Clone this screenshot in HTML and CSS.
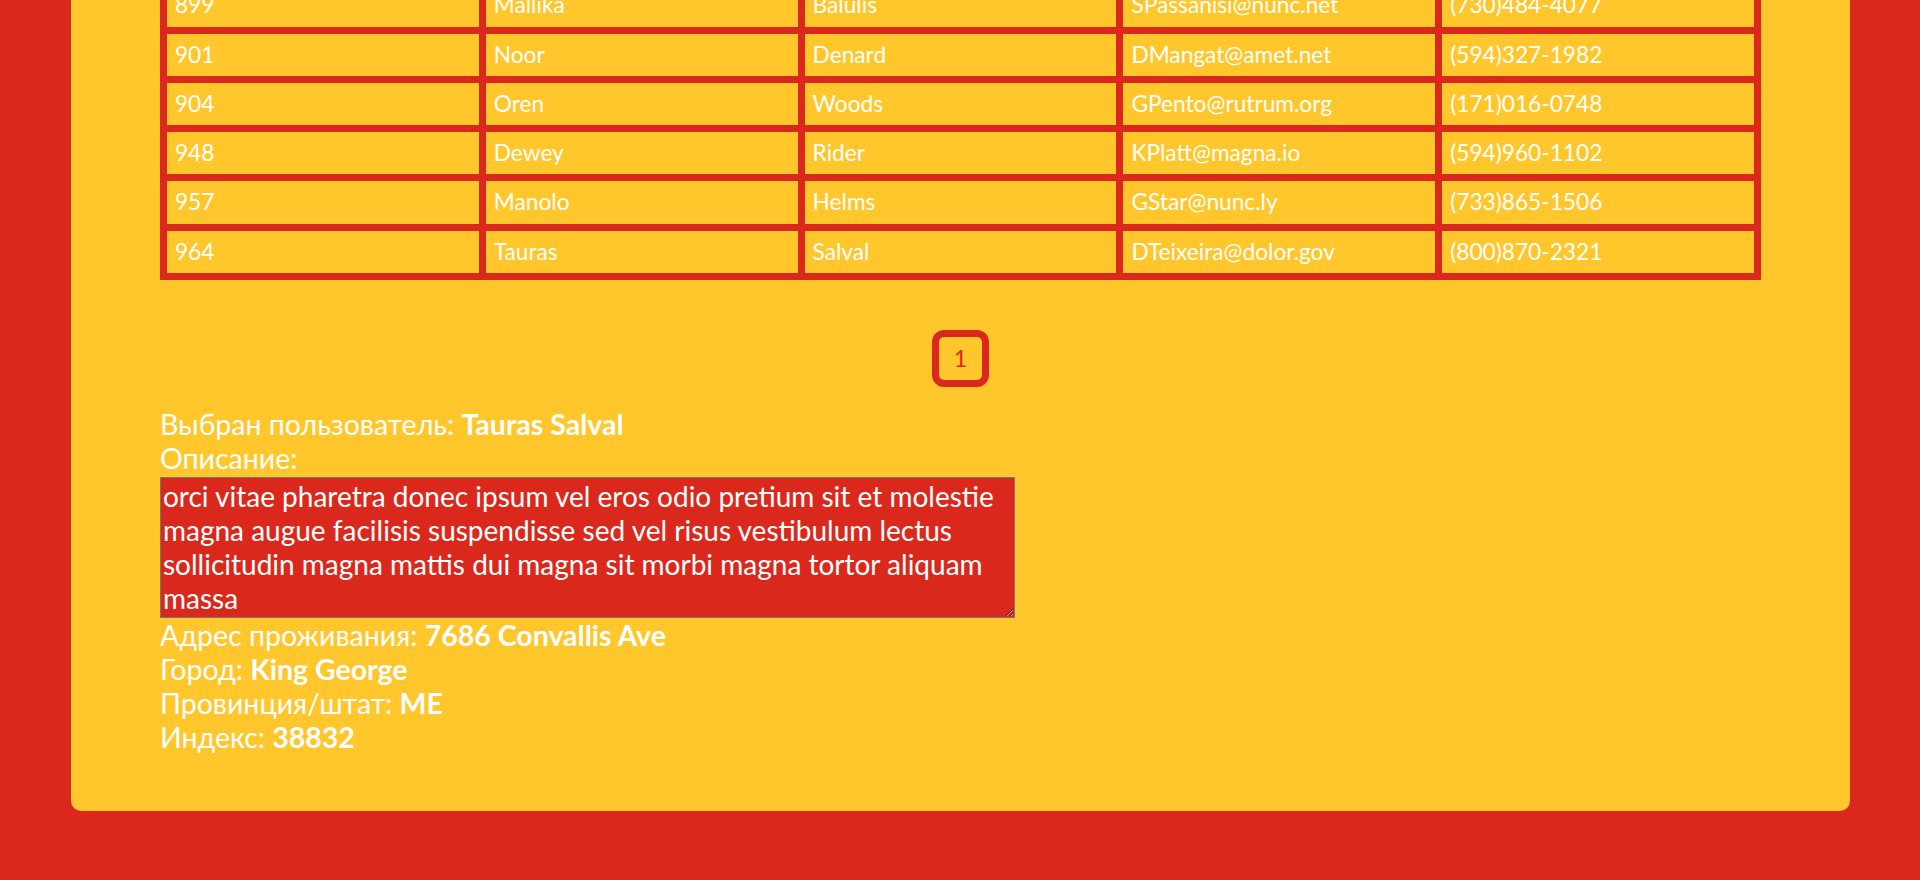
FILE: index.html
```html
<!DOCTYPE html>
<html lang="ru">
<head>
<meta charset="utf-8">
<title>Таблица пользователей</title>
<link rel="stylesheet" href="styles.css">
</head>
<body>
<div class="page">
  <div class="inner">
    <table class="users">
      <thead>
        <tr><th>id</th><th>firstName</th><th>lastName</th><th>email</th><th>phone</th></tr>
      </thead>
      <tbody>
        <tr><td>899</td><td>Mallika</td><td>Balulis</td><td>SPassanisi@nunc.net</td><td>(730)484-4077</td></tr>
        <tr><td>901</td><td>Noor</td><td>Denard</td><td>DMangat@amet.net</td><td>(594)327-1982</td></tr>
        <tr><td>904</td><td>Oren</td><td>Woods</td><td>GPento@rutrum.org</td><td>(171)016-0748</td></tr>
        <tr><td>948</td><td>Dewey</td><td>Rider</td><td>KPlatt@magna.io</td><td>(594)960-1102</td></tr>
        <tr><td>957</td><td>Manolo</td><td>Helms</td><td>GStar@nunc.ly</td><td>(733)865-1506</td></tr>
        <tr><td>964</td><td>Tauras</td><td>Salval</td><td>DTeixeira@dolor.gov</td><td>(800)870-2321</td></tr>
      </tbody>
    </table>

    <div class="pager">
      <button class="pager-btn" type="button">1</button>
    </div>

    <div class="info">
      <div class="info-line">Выбран пользователь: <b>Tauras Salval</b></div>
      <div class="info-line">Описание:</div>
      <textarea class="description">orci vitae pharetra donec ipsum vel eros odio pretium sit et molestie magna augue facilisis suspendisse sed vel risus vestibulum lectus sollicitudin magna mattis dui magna sit morbi magna tortor aliquam massa</textarea>
      <div class="info-line">Адрес проживания: <b>7686 Convallis Ave</b></div>
      <div class="info-line">Город: <b>King George</b></div>
      <div class="info-line">Провинция/штат: <b>ME</b></div>
      <div class="info-line">Индекс: <b>38832</b></div>
    </div>
  </div>
</div>
<script src="script.js"></script>
</body>
</html>
```

FILE: styles.css
```css
html, body {
  margin: 0;
}

body {
  background: #DA291C;
  color: #ffffff;
  font-family: Lato, "Noto Sans", sans-serif;
  padding: 69px 0;
}

.page {
  width: 1779px;
  margin-left: 71px;
  box-sizing: border-box;
  padding: 57px 0 56.5px;
  background: #FFC72C;
  border-radius: 10px;
}

.inner {
  width: 90%;
  margin: 0 auto;
}

/* table */
.users {
  width: 100%;
  table-layout: fixed;
  border-collapse: separate;
  border-spacing: 7px;
  background: #DA291C;
}

.users th,
.users td {
  background: #FFC72C;
  color: #ffffff;
  font-size: 22.7px;
  line-height: 26.25px;
  padding: 8px;
  text-align: left;
  white-space: nowrap;
  overflow: hidden;
}

.users th {
  font-weight: 700;
}

/* pagination */
.pager {
  display: flex;
  justify-content: center;
  margin-top: 50px;
}

.pager-btn {
  width: 57px;
  height: 57px;
  box-sizing: border-box;
  border: 7px solid #DA291C;
  border-radius: 12px;
  background: transparent;
  color: #DA291C;
  font-family: Lato, "Noto Sans", sans-serif;
  font-size: 23px;
  font-weight: 400;
  padding: 0;
  display: flex;
  align-items: center;
  justify-content: center;
}

/* selected user info */
.info {
  margin-top: 20.5px;
  font-size: 28.5px;
  line-height: 34px;
}

.info b {
  font-weight: 700;
}

.description {
  display: block;
  width: 855px;
  height: 141px;
  margin: 2px 0 0;
  box-sizing: border-box;
  border: 1px solid #767676;
  padding: 1px 2px;
  background: #DA291C;
  color: #ffffff;
  font-family: Lato, "Noto Sans", sans-serif;
  font-size: 28px;
  line-height: 34px;
}
```

FILE: script.js
```js
function scrollToBottom() {
  window.scrollTo(0, document.documentElement.scrollHeight);
}
scrollToBottom();
window.addEventListener('load', scrollToBottom);
```
